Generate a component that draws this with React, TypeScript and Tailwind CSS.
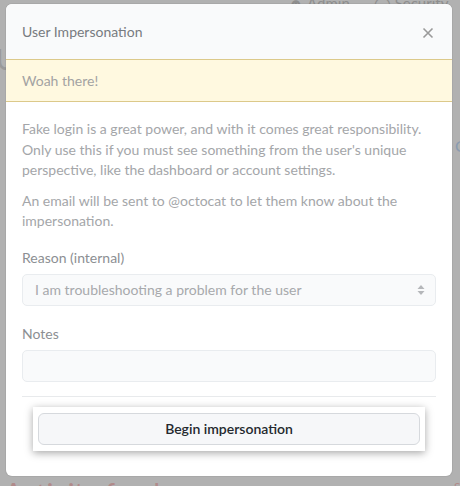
import React from 'react';

const font = { fontFamily: 'Lato, "Noto Sans", Arial, sans-serif' };

export default function App() {
  return (
    <div className="relative w-[460px] h-[486px] overflow-hidden bg-[#b1b1b1]" style={font}>
      {/* page behind the overlay */}
      <div className="absolute top-[-8px] left-[288px] flex gap-6 text-[15px] text-[#8e8e8e]">
        <span>&#9787; Admin</span>
        <span>&#9711; Security</span>
      </div>
      <div className="absolute top-[38px] left-[-4px] text-[28px] text-[#9a9a9a]">U</div>
      <div className="absolute top-[134px] left-[455px] text-[16px] text-[#8a9bb0]">C</div>
      <div className="absolute top-[472px] left-[4px] text-[28px] text-[#b08a8a]">Activity feed</div>
      <div className="absolute top-[478px] left-[454px] text-[12px] text-[#b08a8a]">S</div>

      <div className="relative ml-[6px] mt-[4px] w-[446px] overflow-hidden rounded-md bg-white shadow-[0_0_0_1px_rgba(0,0,0,0.05)]">
        <div className="flex h-[55px] items-center justify-between bg-[#f9fafb] pl-4 pr-[18px]">
          <span className="text-[14px] text-[#777b80]">User Impersonation</span>
          <svg width="12" height="12" viewBox="0 0 12 12" className="mt-[2px]">
            <path d="M1.5 1.5 L10.5 10.5 M10.5 1.5 L1.5 10.5" stroke="#9a9a9a" strokeWidth="1.6" />
          </svg>
        </div>
        <div className="flex h-[43px] items-center border-y border-[#dcc98a] bg-[#fff9e0] px-4 text-[14px] text-[#a3a3a3]">
          Woah there!
        </div>

        <div className="flex flex-col px-4 pt-[17px] pb-[25px]">
          <p className="text-[14px] leading-[20.5px] text-[#a4a6a9]">
            Fake login is a great power, and with it comes great responsibility. Only use this if you must see something from the user's unique perspective, like the dashboard or account settings.
          </p>
          <p className="mt-[10px] text-[14px] leading-[20.5px] text-[#a4a6a9]">
            An email will be sent to @octocat to let them know about the impersonation.
          </p>

          <label className="mt-[15px] text-[14px] text-[#8c8f93]">Reason (internal)</label>
          <div className="mt-[6px] flex h-[32px] items-center justify-between rounded-[5px] border border-[#e9ecef] bg-[#f9fafb] pl-3 pr-[10px] text-[14px] text-[#a7a9ac]">
            <span>I am troubleshooting a problem for the user</span>
            <svg width="8" height="12" viewBox="0 0 8 12">
              <path d="M4 1 L7.5 5 L0.5 5 Z M4 11 L7.5 7 L0.5 7 Z" fill="#b5b7ba" />
            </svg>
          </div>

          <label className="mt-[17px] text-[14px] text-[#8c8f93]">Notes</label>
          <div className="mt-[6px] h-[32px] rounded-[5px] border border-[#e9ecef] bg-[#f9fafb]" />

          <div className="mt-[14px] border-t border-[#e8eaec]" />

          <div className="mx-[11px] mt-[10px] bg-white px-[5px] py-[6px] shadow-[0_2px_8px_rgba(0,0,0,0.35)]">
            <button className="flex h-[32px] w-full items-center justify-center rounded-[6px] border border-[#d6d9dd] bg-[#f6f7f9] text-[14px] font-semibold text-[#24292e]">
              Begin impersonation
            </button>
          </div>
        </div>
      </div>
    </div>
  );
}
